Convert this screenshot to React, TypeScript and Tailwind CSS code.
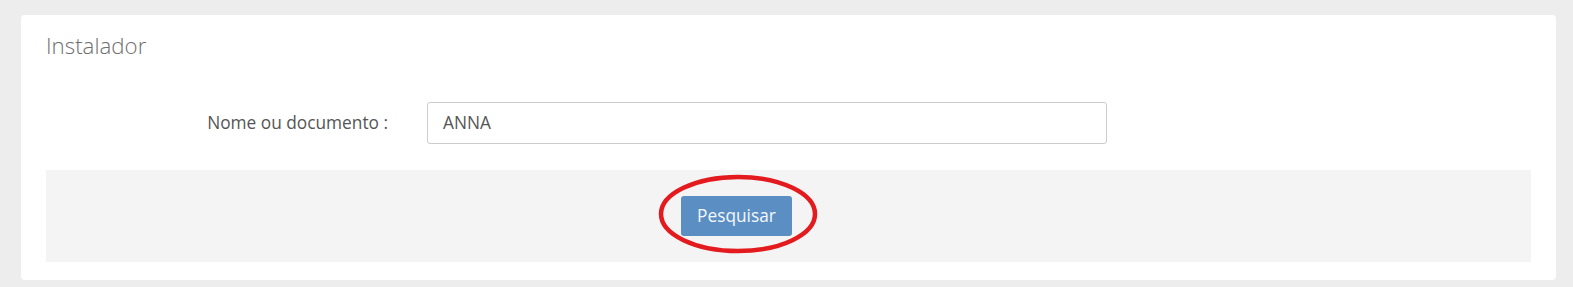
import React from "react";

export default function App() {
  return (
    <div
      className="relative min-h-[287px] bg-[#ededed] pt-[15px] pl-[21px]"
      style={{ fontFamily: '"Open Sans", "Liberation Sans", sans-serif' }}
    >
      <div className="w-[1535px] h-[265px] bg-white rounded-[4px] px-[25px] pt-[16px]">
        <h1 className="text-[22.3px] leading-[30px] font-light text-[#6f6f6f]">Instalador</h1>
        <div className="mt-[41px] flex items-center h-[42px]">
          <label className="w-[342px] text-right text-[17.3px] text-[#555]">Nome ou documento :</label>
          <div className="ml-[39px] w-[680px] h-[42px] border border-[#cccccc] rounded-[3px] flex items-center pl-[15px] text-[17.3px] text-[#555]">
            ANNA
          </div>
        </div>
        <div className="mt-[26px] h-[92px] bg-[#f4f4f4] flex items-center pl-[635px]">
          <button className="w-[111px] h-[40px] rounded-[3px] bg-[#5b8fc4] text-[17.3px] text-[#f4f7fb]">
            Pesquisar
          </button>
        </div>
      </div>
      <svg
        className="absolute left-[657px] top-[173px]"
        width="162"
        height="82"
        viewBox="0 0 162 82"
      >
        <ellipse cx="81" cy="41" rx="77" ry="37" fill="none" stroke="#e31b1f" strokeWidth="4.5" />
      </svg>
    </div>
  );
}
